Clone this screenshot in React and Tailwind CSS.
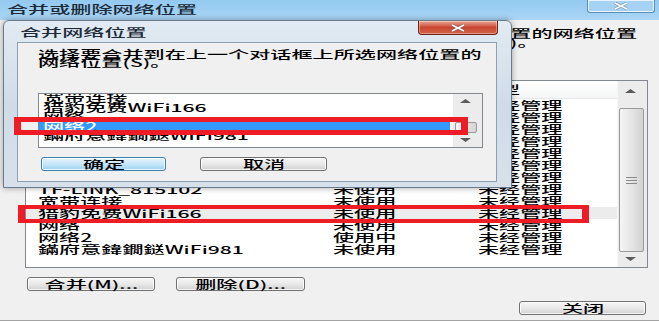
const FONT = "font-['Noto_Sans_CJK_SC','Noto_Sans',sans-serif]";

const ROWS = [
  { name: 'ChinaNet-8k2F', state: '未使用' },
  { name: 'CMCC-EDU', state: '未使用' },
  { name: 'HUAWEI-A1B2', state: '未使用' },
  { name: 'MERCURY_3C7E', state: '未使用' },
  { name: 'TP-LINK_6A10', state: '未使用' },
  { name: 'Tenda_5D8A20', state: '未使用' },
  { name: 'FAST_2B6C', state: '未使用' },
  { name: 'TF-LINK_815102', state: '未使用' },
  { name: '宽带连接', state: '未使用' },
  { name: '猎豹免费WiFi166', state: '未使用', hover: true },
  { name: '网络', state: '未使用' },
  { name: '网络2', state: '使用中' },
  { name: '鏋府意鍏鐗鎹WiFi981', state: '未使用' },
];

const INNER_ROWS = ['宽带连接', '猎豹免费WiFi166', '网络', '网络2', '鏋府意鍏鐗鎹WiFi981'];

// stretched text, the screenshot is wide
function T({ children, className = '' }) {
  return (
    <span className={`inline-block origin-left scale-x-[1.92] whitespace-nowrap ${className}`}>
      {children}
    </span>
  );
}

function TC({ children }) {
  return <span className="inline-block origin-center scale-x-[1.92] whitespace-nowrap">{children}</span>;
}

function TR({ children }) {
  return <span className="inline-block origin-right scale-x-[1.92] whitespace-nowrap">{children}</span>;
}

function Arrow({ down }) {
  return (
    <svg width="11" height="5" viewBox="0 0 11 5">
      <polygon points={down ? '0,0 11,0 5.5,4' : '0,5 11,5 5.5,1'} fill="#5a5a5a" />
    </svg>
  );
}

function Btn({ children, primary, className = '' }) {
  const skin = primary
    ? 'border-[#3c7fb1] from-[#e8f5fc] via-[#c6e6f7] to-[#9dd3f0]'
    : 'border-[#707070] from-[#f6f6f6] via-[#e9e9e9] to-[#d0d0d0]';
  return (
    <div
      className={`h-[14px] rounded-[3px] border bg-gradient-to-b shadow-[inset_0_0_0_1px_rgba(255,255,255,0.8)] flex items-center justify-center leading-[11px] ${skin} ${className}`}
    >
      <TC>{children}</TC>
    </div>
  );
}

function CloseX({ color = '#ffffff' }) {
  return (
    <svg width="16" height="8" viewBox="0 0 16 8">
      <path d="M2 1 L14 7 M14 1 L2 7" stroke="#4a5a6a" strokeOpacity="0.5" strokeWidth="3" />
      <path d="M2 1 L14 7 M14 1 L2 7" stroke={color} strokeWidth="1.6" />
    </svg>
  );
}

function OuterList() {
  return (
    <div className="mt-[33px] w-[623px] h-[188px] border border-[#828790] bg-white flex">
      <div className="flex-1 overflow-hidden">
        <div className="h-[18px] flex items-center pl-[12px] bg-gradient-to-b from-white to-[#f4f5f6] border-b border-[#e8e8e8] leading-[11px]">
          <div className="w-[295px]"><T>名称</T></div>
          <div className="w-[145px]"><T>状态</T></div>
          <div><T>类型</T></div>
        </div>
        {ROWS.map((r, i) => (
          <div
            key={i}
            className={`h-[12px] flex items-center pl-[12px] leading-[11px] ${r.hover ? 'bg-[#ececec]' : ''}`}
          >
            <div className="w-[295px]"><T>{r.name}</T></div>
            <div className="w-[145px]"><T>{r.state}</T></div>
            <div><T>未经管理</T></div>
          </div>
        ))}
      </div>
      <div className="w-[30px] bg-[#ececec] border-l border-[#f7f7f7] flex flex-col">
        <div className="h-[19px] flex items-center justify-center pr-[4px]"><Arrow /></div>
        <div className="mt-[8px] ml-[1px] w-[25px] h-[144px] rounded-[2px] border border-[#9a9a9a] bg-gradient-to-r from-[#f5f5f5] via-[#e6e6e6] to-[#d2d2d2] flex flex-col items-center justify-center gap-[2px]">
          <div className="w-[11px] h-px bg-[#8a8a8a]" />
          <div className="w-[11px] h-px bg-[#8a8a8a]" />
          <div className="w-[11px] h-px bg-[#8a8a8a]" />
        </div>
        <div className="flex-1 flex items-center justify-center pr-[4px]"><Arrow down /></div>
      </div>
    </div>
  );
}

function InnerDialog() {
  return (
    <div className="absolute left-[3px] top-[20px] w-[509px] h-[168px] rounded-t-[6px] border border-[#6a7b8c] bg-gradient-to-b from-[#e2ebf3] via-[#cfdce8] to-[#d6e1eb] shadow-[0_0_6px_rgba(0,0,0,0.35)] flex flex-col">
      <div className="h-[21px] flex items-start justify-between">
        <div className="pl-[16px] pt-[6px] leading-[11px] text-[#1c2a38]"><T>合并网络位置</T></div>
        <div className="mr-[13px] w-[80px] h-[14px] rounded-b-[4px] border border-t-0 border-[#6e2417] bg-gradient-to-b from-[#e9a898] via-[#c9452f] to-[#d5654a] shadow-[inset_0_0_0_1px_rgba(255,255,255,0.35)] flex items-center justify-center">
          <CloseX />
        </div>
      </div>
      <div className="ml-[13px] w-[480px] h-[140px] border border-[#8d9fb1] bg-[#f0f0f0] flex flex-col">
        <div className="mt-[7px] pl-[20px]">
          <div className="h-[8px] leading-[8px]"><T>选择要合并到在上一个对话框上所选网络位置的</T></div>
          <div className="h-[8px] leading-[8px]"><T>网络位置(S)。</T></div>
        </div>
        <div className="mt-[27px] ml-[20px] w-[445px] h-[55px] border border-[#828790] bg-white flex">
          <div className="flex-1 overflow-hidden">
            {INNER_ROWS.map((n, i) => (
              <div
                key={i}
                className={`h-[9.5px] leading-[9.5px] flex items-center pl-[4px] ${i === 0 ? '-mt-[1px]' : ''} ${n === '网络2' ? 'bg-[#3399ff] text-white mr-[3px]' : ''}`}
              >
                <T>{n}</T>
              </div>
            ))}
          </div>
          <div className="w-[29px] bg-[#ececec] flex flex-col">
            <div className="h-[12px] flex items-center justify-center pr-[4px]"><Arrow /></div>
            <div className="mt-[16px] ml-[2px] w-[22px] h-[11px] rounded-[2px] border border-[#9a9a9a] bg-gradient-to-r from-[#f5f5f5] to-[#d4d4d4]" />
            <div className="flex-1 flex items-center justify-center pr-[4px]"><Arrow down /></div>
          </div>
        </div>
        <div className="mt-[9px] flex">
          <Btn primary className="ml-[23px] w-[125px]">确定</Btn>
          <Btn className="ml-[34px] w-[127px]">取消</Btn>
        </div>
      </div>
    </div>
  );
}

export default function App() {
  return (
    <div className={`relative w-[659px] h-[321px] overflow-hidden bg-[#f0f0f0] text-[11px] font-medium text-black ${FONT}`}>
      <div className="h-[20px] flex items-start justify-between bg-gradient-to-b from-[#93c9f0] to-[#aad6f5]">
        <div className="pl-[7px] pt-[4px] leading-[11px] text-[#1b2b3a]"><T>合并或删除网络位置</T></div>
        <div className="mr-[4px] w-[68px] h-[13px] rounded-b-[3px] border border-t-0 border-[#5e8db3] bg-[#a6d3f3] shadow-[inset_0_0_0_1px_rgba(255,255,255,0.75)] flex items-center justify-center">
          <CloseX />
        </div>
      </div>

      <div className="h-[301px] border-b border-[#a3a3a3] flex flex-col pl-[25px]">
        <div className="mt-[9px]">
          <div className="h-[9px] leading-[9px] flex justify-end pr-[22px]">
            <TR>请从下面列出此计算机上所有已配置的网络位置</TR>
          </div>
          <div className="h-[9px] leading-[9px] flex justify-end pr-[120px]">
            <TR>然后单击合并或删除以修改所选网络位置(D)。</TR>
          </div>
        </div>
        <OuterList />
        <div className="mt-[9px] flex">
          <Btn className="ml-[2px] w-[128px]">合并(M)...</Btn>
          <Btn className="ml-[21px] w-[129px]">删除(D)...</Btn>
        </div>
        <Btn className="mt-[10px] ml-[494px] w-[127px]">关闭</Btn>
      </div>

      <InnerDialog />

      <div className="absolute left-[14px] top-[117px] w-[454px] h-[18px] border-x-[7px] border-y-[5px] border-[#ee1c25]" />
      <div className="absolute left-[18px] top-[205px] w-[571px] h-[18px] border-x-[7px] border-y-[4px] border-[#ee1c25]" />
    </div>
  );
}
